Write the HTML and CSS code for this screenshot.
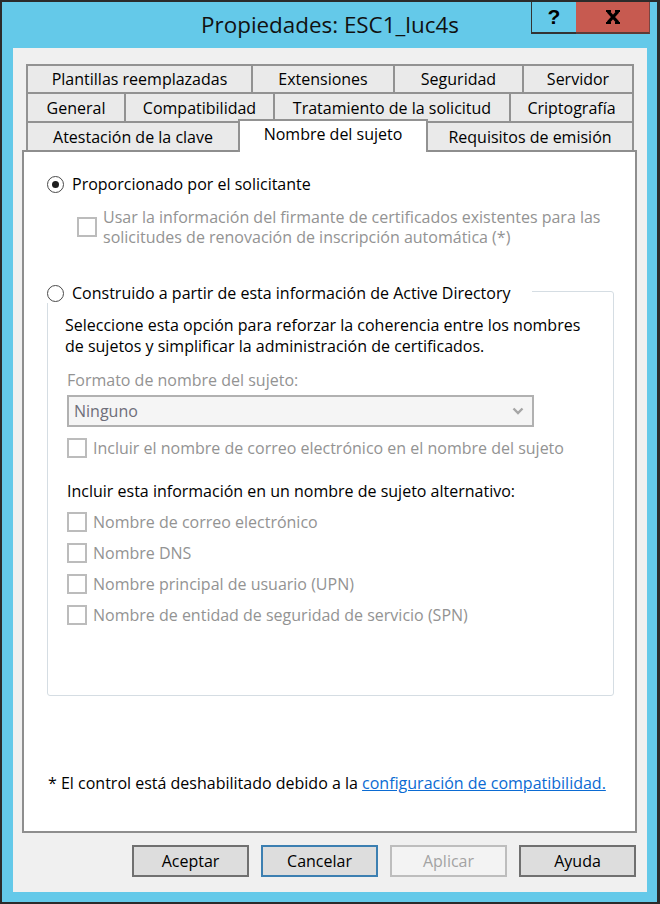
FILE: index.html
```html
<!DOCTYPE html>
<html lang="es">
<head>
<meta charset="utf-8">
<title>Propiedades: ESC1_luc4s</title>
<link rel="stylesheet" href="styles.css">
</head>
<body>
<div class="window">
  <div class="titlebar">
    <div class="title">Propiedades: ESC1_luc4s</div>
    <div class="caption-buttons">
      <div class="cap-help">?</div>
      <div class="cap-close">
        <svg width="16" height="14" viewBox="0 0 16 14">
          <path d="M3 1.5 L13 12.5 M13 1.5 L3 12.5" stroke="#000" stroke-width="3.2" fill="none"/>
          <path d="M1 1 H6 M10 1 H15 M1 13 H6 M10 13 H15" stroke="#000" stroke-width="2" fill="none"/>
        </svg>
      </div>
    </div>
  </div>
  <div class="client">
    <div class="tabs">
      <div class="tab-row">
        <div class="tab w225">Plantillas reemplazadas</div>
        <div class="tab w142">Extensiones</div>
        <div class="tab w129">Seguridad</div>
        <div class="tab w112 last">Servidor</div>
      </div>
      <div class="tab-row">
        <div class="tab w98">General</div>
        <div class="tab w149">Compatibilidad</div>
        <div class="tab w236">Tratamiento de la solicitud</div>
        <div class="tab w125 last">Criptografía</div>
      </div>
      <div class="tab-row">
        <div class="tab w212">Atestación de la clave</div>
        <div class="tab w190 selected">Nombre del sujeto</div>
        <div class="tab w206 last">Requisitos de emisión</div>
      </div>
    </div>
    <div class="panel">
      <div class="option opt-first">
        <span class="radio checked"></span>
        <span class="label">Proporcionado por el solicitante</span>
      </div>
      <div class="check sub-check">
        <span class="box"></span>
        <span class="label disabled">Usar la información del firmante de certificados existentes para las<br>solicitudes de renovación de inscripción automática (*)</span>
      </div>
      <div class="group">
        <div class="option group-label">
          <span class="radio"></span>
          <span class="label">Construido a partir de esta información de Active Directory</span>
        </div>
        <p class="desc">Seleccione esta opción para reforzar la coherencia entre los nombres<br>de sujetos y simplificar la administración de certificados.</p>
        <div class="field-label disabled">Formato de nombre del sujeto:</div>
        <div class="combo">
          <span class="combo-text">Ninguno</span>
          <svg class="chev" width="12" height="8" viewBox="0 0 12 8"><path d="M1.5 1.5 L6 6 L10.5 1.5" stroke="#a6a6a6" stroke-width="2.4" fill="none"/></svg>
        </div>
        <div class="check row-email">
          <span class="box"></span>
          <span class="label disabled">Incluir el nombre de correo electrónico en el nombre del sujeto</span>
        </div>
        <div class="alt-title">Incluir esta información en un nombre de sujeto alternativo:</div>
        <div class="check alt-item">
          <span class="box"></span>
          <span class="label disabled">Nombre de correo electrónico</span>
        </div>
        <div class="check alt-item">
          <span class="box"></span>
          <span class="label disabled">Nombre DNS</span>
        </div>
        <div class="check alt-item">
          <span class="box"></span>
          <span class="label disabled">Nombre principal de usuario (UPN)</span>
        </div>
        <div class="check alt-item">
          <span class="box"></span>
          <span class="label disabled">Nombre de entidad de seguridad de servicio (SPN)</span>
        </div>
      </div>
      <div class="note">* El control está deshabilitado debido a la <a class="link" href="#">configuración de compatibilidad.</a></div>
    </div>
    <div class="buttons">
      <div class="btn">Aceptar</div>
      <div class="btn focused">Cancelar</div>
      <div class="btn off">Aplicar</div>
      <div class="btn">Ayuda</div>
    </div>
  </div>
</div>
</body>
</html>
```
FILE: styles.css
```css
* { box-sizing: border-box; }
html, body { margin: 0; padding: 0; }
body {
  width: 660px;
  height: 904px;
  font-family: "Open Sans", "Liberation Sans", Arial, sans-serif;
  font-size: 16px;
  color: #000;
}
.window {
  width: 660px;
  height: 904px;
  background: #64c9e9;
  border-top: 2px solid #2b2b2b;
  border-left: 2px solid #2b2b2b;
  border-right: 3px solid #2b2b2b;
  border-bottom: 2px solid #2b2b2b;
  padding: 0 10px 10px 11px;
  display: flex;
  flex-direction: column;
  position: relative;
}
.titlebar {
  height: 46px;
  display: flex;
  align-items: center;
  justify-content: center;
  flex: none;
}
.title {
  font-size: 22.4px;
  line-height: 28px;
  color: #111;
  margin-top: -1px;
}
.caption-buttons {
  position: absolute;
  top: 0;
  right: 7px;
  display: flex;
}
.cap-help {
  width: 45px;
  height: 32px;
  border-left: 1px solid #333;
  border-bottom: 2px solid #333;
  font-family: "Liberation Sans", Arial, sans-serif;
  font-weight: bold;
  font-size: 21px;
  line-height: 30px;
  text-align: center;
  color: #000;
}
.cap-close {
  width: 74px;
  height: 32px;
  background: #c75a50;
  border-bottom: 2px solid #5e3a36;
  border-right: 1px solid #7b4440;
  display: flex;
  align-items: center;
  justify-content: center;
}
.client {
  flex: 1;
  background: #f0f0f0;
  padding: 16px 10px 15px 9px;
  display: flex;
  flex-direction: column;
}
.tabs {
  margin-left: 4px;
  width: 608px;
}
.tab-row {
  display: flex;
  height: 29px;
  align-items: flex-start;
}
.tab-row:first-child { height: 28px; }
.tab {
  height: 100%;
  border-top: 2px solid #929292;
  border-left: 2px solid #929292;
  background: #eaeaea;
  display: flex;
  align-items: center;
  justify-content: center;
  white-space: nowrap;
  line-height: 20px;
}
.tab.last { border-right: 2px solid #929292; }
.tab.selected {
  position: relative;
  z-index: 1;
  background: #fff;
  height: 33px;
  margin-top: -2px;
  border-right: 2px solid #929292;
  align-items: flex-start;
  padding-top: 3px;
}
.tab.selected + .tab { border-left: none; }
.w225 { width: 225px; } .w142 { width: 142px; } .w129 { width: 129px; } .w112 { width: 112px; }
.w98 { width: 98px; } .w149 { width: 149px; } .w236 { width: 236px; } .w125 { width: 125px; }
.w212 { width: 212px; } .w190 { width: 190px; } .w206 { width: 206px; }

.panel {
  height: 683px;
  background: #fff;
  border: 2px solid #8e8e8e;
  padding: 22px 21px 0 23px;
  flex: none;
}
.option {
  display: flex;
  align-items: center;
  height: 20px;
}
.radio {
  width: 17px;
  height: 17px;
  border-radius: 50%;
  border: 1px solid #4a4a4a;
  background: #fff;
  flex: none;
  display: flex;
  align-items: center;
  justify-content: center;
  margin-right: 8px;
}
.radio.checked::after {
  content: "";
  width: 7px;
  height: 7px;
  border-radius: 50%;
  background: #1e1e1e;
}
.label { white-space: nowrap; line-height: 20px; }
.disabled { color: #939393; }
.check {
  display: flex;
  align-items: center;
}
.box {
  width: 20px;
  height: 20px;
  border: 2px solid #bcbcbc;
  background: #fff;
  flex: none;
  margin-right: 6px;
}
.sub-check {
  margin: 13px 0 0 30px;
}
.group {
  margin-top: 44px;
  height: 405px;
  border: 1px solid #d5dde3;
  border-radius: 3px;
  padding: 0 0 0 19px;
}
.group-label {
  margin: -9px 0 0 -20px;
  width: fit-content;
  background: #fff;
  padding-right: 21px;
}
.desc {
  margin: 12px 0 0 -2px;
  line-height: 21px;
}
.field-label {
  margin-top: 13px;
  line-height: 20px;
}
.combo {
  margin-top: 5px;
  width: 467px;
  height: 32px;
  border: 2px solid #b1b1b1;
  background: #f5f5f5;
  display: flex;
  align-items: center;
  justify-content: space-between;
  padding: 0 8px 0 5px;
}
.combo-text { color: #6e6e7a; }
.row-email { margin-top: 11px; }
.alt-title {
  margin-top: 23px;
  line-height: 20px;
}
.alt-item { margin-top: 11px; }
.note {
  margin: 77px 0 0 1px;
  line-height: 20px;
  white-space: nowrap;
}
.link {
  color: #0b6bd3;
  text-decoration: underline;
}
.buttons {
  display: flex;
  justify-content: flex-end;
  gap: 12px;
  margin-top: 12px;
  padding-right: 1px;
}
.btn {
  width: 117px;
  height: 32px;
  border: 2px solid #707070;
  background: #dddddd;
  display: flex;
  align-items: center;
  justify-content: center;
}
.btn.focused { border-color: #3c7fb1; }
.btn.off {
  border-color: #bdbdbd;
  background: #f3f3f3;
  color: #a3a3a3;
}
```
